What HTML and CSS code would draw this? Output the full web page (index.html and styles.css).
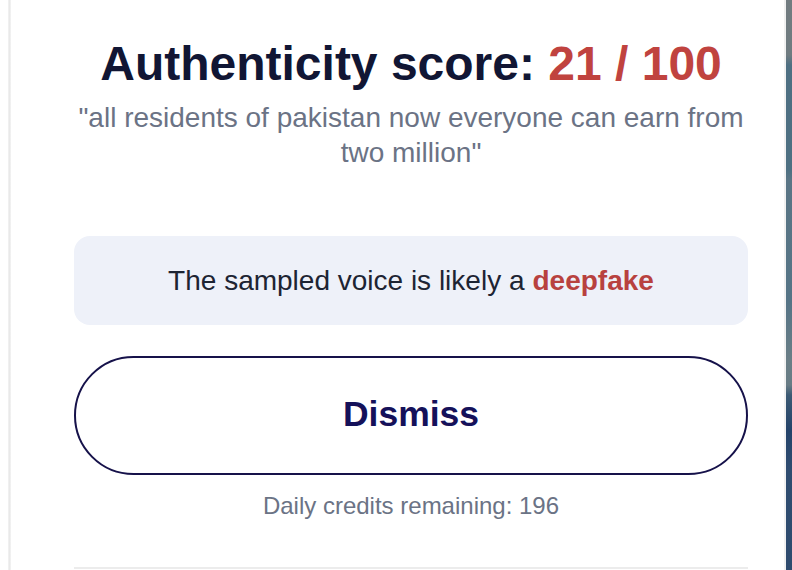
FILE: index.html
```html
<!DOCTYPE html>
<html lang="en">
<head>
<meta charset="utf-8">
<title>Authenticity score</title>
<link rel="stylesheet" href="styles.css">
</head>
<body>
<div class="frame">
  <div class="edge-left"></div>
  <main class="popup">
    <h1 class="title">Authenticity score: <span class="score">21 / 100</span></h1>
    <p class="quote">"all residents of pakistan now everyone can earn from two million"</p>
    <div class="verdict">The sampled voice is likely a <strong class="fake">deepfake</strong></div>
    <button class="dismiss" type="button">Dismiss</button>
    <p class="credits">Daily credits remaining: 196</p>
    <div class="divider"></div>
  </main>
  <div class="backdrop"></div>
</div>
</body>
</html>
```
FILE: styles.css
```css
html, body {
  margin: 0;
  padding: 0;
  background: #ffffff;
}
body {
  font-family: "Liberation Sans", Arial, sans-serif;
  width: 792px;
  height: 570px;
  overflow: hidden;
}
.frame {
  display: flex;
  height: 570px;
}
.edge-left {
  width: 3px;
  margin-left: 8px;
  background: linear-gradient(to right, #f4f4f4, #e9e9e9, #f4f4f4);
}
.popup {
  flex: 1;
  display: flex;
  flex-direction: column;
  align-items: stretch;
  padding: 37px 36px 0 63px;
  background: #ffffff;
  border-right: 2px solid #f1f1f1;
}
.title {
  margin: 0;
  font-size: 48px;
  line-height: 54px;
  font-weight: 700;
  color: #111634;
  text-align: center;
  white-space: nowrap;
}
.score {
  color: #c0433f;
}
.quote {
  margin: 9px 0 0;
  font-size: 28px;
  line-height: 35px;
  color: #6b7385;
  text-align: center;
}
.verdict {
  margin-top: 66px;
  height: 89px;
  border-radius: 16px;
  background: #eef1f9;
  display: flex;
  align-items: center;
  justify-content: center;
  font-size: 28px;
  color: #1d2433;
}
.fake {
  color: #b8413f;
  font-weight: 700;
  margin-left: 8px;
}
.dismiss {
  margin-top: 31px;
  height: 119px;
  border: 2px solid #16124a;
  border-radius: 60px;
  background: #ffffff;
  font-family: "Liberation Sans", Arial, sans-serif;
  font-size: 35.5px;
  font-weight: 700;
  color: #15115a;
  padding: 0 0 2px;
}
.credits {
  margin: 16px 0 0;
  font-size: 24px;
  line-height: 30px;
  color: #6b7385;
  text-align: center;
}
.divider {
  margin-top: 46px;
  height: 2px;
  background: #ececec;
}
.backdrop {
  width: 6px;
  background: linear-gradient(to bottom, #727c80 0px, #6f7b80 55px, #4e6f82 65px, #4e7082 170px, #5a7585 180px, #557486 300px, #6a7e86 360px, #687c85 385px, #3c5a74 395px, #24436a 430px, #2f4c70 470px, #2e4b6e 570px);
}
```
